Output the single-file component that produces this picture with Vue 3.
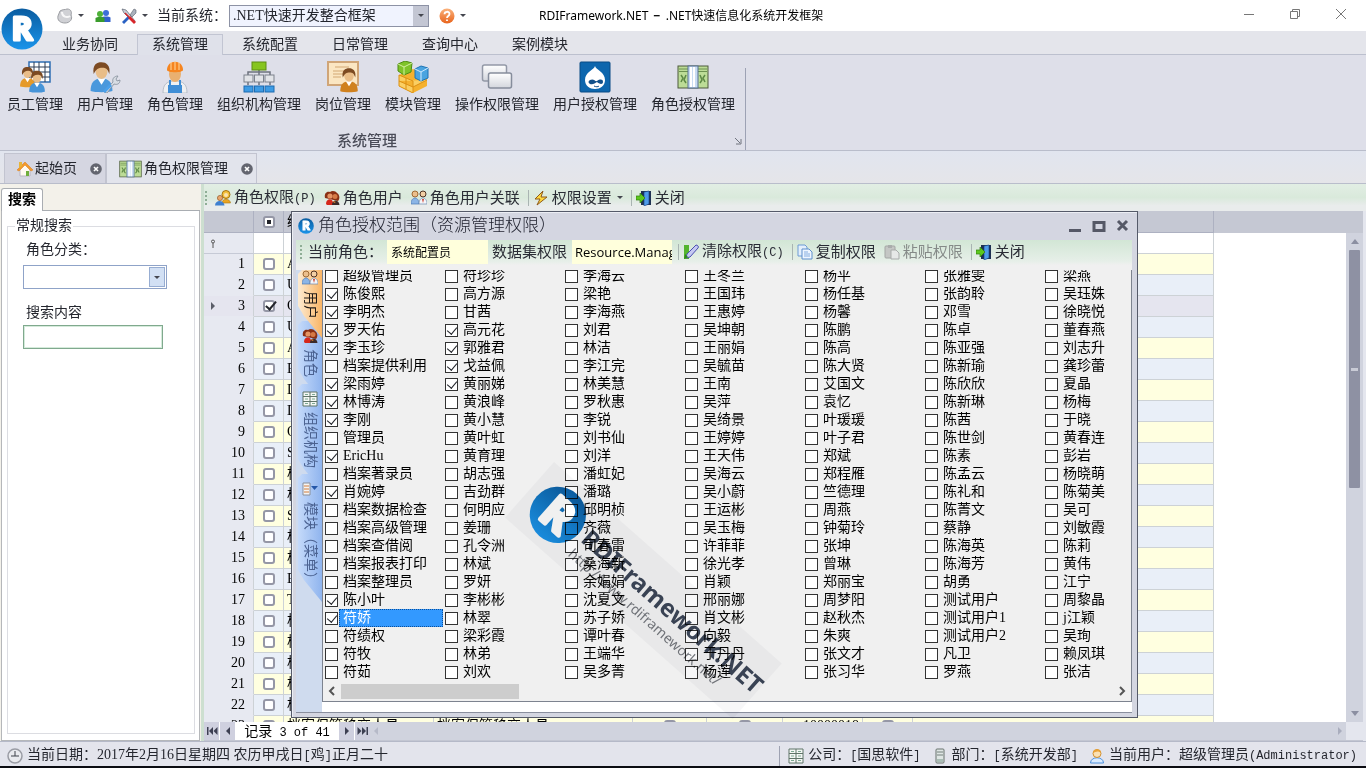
<template>
  <svg class="sprite" aria-hidden="true">
    <defs>
      <linearGradient id="g-blue" x1="0" y1="0" x2="0" y2="1">
        <stop offset="0" stop-color="#0a5ca0" />
        <stop offset="1" stop-color="#1b94ea" />
      </linearGradient>
      <linearGradient id="g-orange" x1="0" y1="0" x2="0" y2="1">
        <stop offset="0" stop-color="#fbb27c" />
        <stop offset="1" stop-color="#e8641c" />
      </linearGradient>
      <linearGradient id="g-gray" x1="0" y1="0" x2="0" y2="1">
        <stop offset="0" stop-color="#ffffff" />
        <stop offset="1" stop-color="#d3d6dd" />
      </linearGradient>
    </defs>
    <symbol id="logo" viewBox="0 0 42 42">
      <circle cx="21" cy="21" r="20.5" fill="url(#g-blue)" />
      <text x="21" y="32" text-anchor="middle" font-family="Open Sans, Noto Sans, sans-serif" font-weight="700" font-size="32" fill="#fff" stroke="#fff" stroke-width="3" stroke-linejoin="round">R</text>
    </symbol>
    <symbol id="man" viewBox="0 0 16 20">
      <path d="M1 19c0-5 2-8 7-8s7 3 7 8c-3 1-11 1-14 0z" fill="currentColor" />
      <path d="M5.500 11l2.500 4 2.500-4z" fill="#fff" />
      <ellipse cx="8" cy="6.500" rx="3.800" ry="4.700" fill="#e9bd88" />
      <path d="M3 8C2 2 5 .5 8 .5s6 2 5 7.500C12 5 11 4 8.500 4S4.500 5 3 8z" fill="#7c4a22" />
    </symbol>
    <symbol id="staff" viewBox="0 0 32 32">
      <path d="M10 1h21v20H10z" fill="#fff" stroke="#2f6fb4" stroke-width="1.500" />
      <path d="M10 6h21M10 11h21M10 16h21M15 1v20M20 1v20M26 1v20" stroke="#2c3c55" fill="none" />
      <use href="#man" x="0" y="5" width="17" height="22" color="#e59a2a" />
      <use href="#man" x="9" y="9" width="18" height="23" color="#4694d8" />
    </symbol>
    <symbol id="user-tool" viewBox="0 0 32 32">
      <use href="#man" x="0" y="0" width="25" height="32" color="#4a98dc" />
      <path d="M15 31l9-10c-1-3 1-6 5-6l-2 3 1 2 3-1c0 4-3 5-6 4l-7 9z" fill="#d8dde4" stroke="#828b98" stroke-width=".8" />
      <path d="M14 30l7-7 2 2-7 7z" fill="#4aa0ea" />
    </symbol>
    <symbol id="worker" viewBox="0 0 32 32">
      <path d="M4 32c0-9 4-12 12-12s12 3 12 12z" fill="#eef0f2" stroke="#9aa4b0" stroke-width=".6" />
      <path d="M10 19v13h12V19h-2v6h-8v-6z" fill="#3f8ed6" />
      <path d="M9 24h14v8H9z" fill="#3f8ed6" />
      <ellipse cx="16" cy="13" rx="6" ry="8" fill="#e9b070" />
      <path d="M8 9C8-2 24-2 24 9c0 3-16 3-16 0z" fill="#f6851f" />
      <path d="M12 1v8M16 0v9M20 1v8" stroke="#ffd9a0" />
    </symbol>
    <symbol id="orgchart" viewBox="0 0 32 32">
      <path d="M16 8v6M5 14v-3h22v3M5 20v4M16 14v10M27 20v4" stroke="#6d737e" stroke-width="1.500" fill="none" />
      <rect x="9" y="1" width="14" height="8" fill="#86c51e" stroke="#5c8d12" />
      <g fill="#e2e4e8" stroke="#7c828c"><rect x="1" y="14" width="9" height="7" /><rect x="11.500" y="14" width="9" height="7" /><rect x="22" y="14" width="9" height="7" /></g>
      <g fill="#3d9be4" stroke="#1d6bb0"><rect x="1" y="25" width="9" height="6" /><rect x="11.500" y="25" width="9" height="6" /><rect x="22" y="25" width="9" height="6" /></g>
    </symbol>
    <symbol id="post" viewBox="0 0 32 32">
      <rect x="1" y="1" width="30" height="23" fill="#fbe6c2" stroke="#d0a577" stroke-width="2" />
      <path d="M8 6h14M6 10h12M6 13h10M6 16h8" stroke="#d3a874" />
      <use href="#man" x="12" y="6" width="20" height="26" color="#d0811e" />
    </symbol>
    <symbol id="cubes" viewBox="0 0 32 32">
      <path d="M2 14l14-6 14 6v11l-14 7-14-7z" fill="#f5b12e" />
      <path d="M2 14l14 6v12L2 25zM9 17v11M2 20l14 6 14-7" fill="#fbcf62" stroke="#dc9013" />
      <path d="M1 3l7-3 7 2-1 9-7 3-6-4z" fill="#7fc32a" stroke="#4f8c14" />
      <path d="M1 3l6 3 8-4M7 6v8" stroke="#d5f0a0" fill="none" />
      <path d="M18 8l6-3 7 2v10l-7 3-6-3z" fill="#4aa4e0" stroke="#1c73b5" />
      <path d="M18 8l6 3 7-4M24 11v9" stroke="#cfeaff" fill="none" />
    </symbol>
    <symbol id="windows" viewBox="0 0 32 32">
      <rect x="1.500" y="4" width="24" height="16" rx="2" fill="url(#g-gray)" stroke="#9298a6" stroke-width="1.500" />
      <rect x="7.500" y="12" width="23" height="15" rx="2" fill="url(#g-gray)" stroke="#868d9c" stroke-width="1.500" />
    </symbol>
    <symbol id="drop" viewBox="0 0 32 32">
      <rect x="1" y="1" width="30" height="30" rx="1" fill="#0d66ad" stroke="#084b85" />
      <path d="M16 5c1 4 10 6 10 14 0 6-5 9-10 9S6 25 6 19c0-8 9-10 10-14z" fill="#fff" />
      <path d="M11 19c4-2 5 2 7 1 3-2 6-2 6 1s-4 2-6 0c-2 1-4 3-7 2-2-1-2-3 0-4z" fill="#12508a" />
      <path d="M15 25c2 1 4 1 5 0" stroke="#12508a" fill="none" />
    </symbol>
    <symbol id="money" viewBox="0 0 32 24">
      <rect x="1" y="1" width="30" height="22" fill="#bcdc96" stroke="#4c5b3c" />
      <path d="M2 4h28M2 6.500h28" stroke="#6c9150" />
      <path d="M4 10l2 3-2 4M9 10l-2 5 2 3M28 10l-2 3 2 4M23 10l2 5-2 3" stroke="#5c8844" fill="none" stroke-width="1.500" />
      <rect x="11" y="1" width="10" height="22" fill="#c8dcf2" stroke="#567192" />
      <path d="M14 2v20M17 2v20" stroke="#fff" stroke-width="2" />
    </symbol>
    <symbol id="bean" viewBox="0 0 16 16">
      <path d="M3 3C6 1 8 2 10 1c4 0 5 3 4 6 2 4-1 8-6 8S0 12 1 8z" fill="#d0d1d5" stroke="#9b9da2" />
      <path d="M5 4c0 5 5 6 8 4" stroke="#f7f7f8" stroke-width="2" fill="none" />
    </symbol>
    <symbol id="people" viewBox="0 0 16 16">
      <circle cx="11" cy="5" r="3" fill="#3c6fd8" /><path d="M6.500 14V9.500C7 8 15 8 15.500 9.500V14z" fill="#3060cc" />
      <circle cx="5" cy="6" r="3" fill="#4fb23a" /><path d="M.5 14v-4C1 8.500 9 8.500 9.500 10v4z" fill="#3a9c2c" />
    </symbol>
    <symbol id="tools" viewBox="0 0 16 16">
      <path d="M1 1l4 1 9 11-1 2L3 5z" fill="#c9cfd8" stroke="#5a6270" stroke-width=".7" />
      <path d="M9 7l4-6 2 1v3l-4 4z" fill="#aab2bd" stroke="#59606b" stroke-width=".6" />
      <path d="M1 14l6-6 2 2-6 6z" fill="#2a62c4" />
      <path d="M9 8l6 6-2 2-6-6z" fill="#d8262a" />
      <path d="M4 5l4 4" stroke="#d8262a" stroke-width="1.500" />
    </symbol>
    <symbol id="help" viewBox="0 0 16 16">
      <circle cx="8" cy="8" r="7.500" fill="url(#g-orange)" />
      <path d="M5.500 6.200C5.500 3 10.500 3 10.500 6c0 2-2.500 2-2.500 4M8 11.500V13" stroke="#fff" stroke-width="1.800" fill="none" />
    </symbol>
    <symbol id="home" viewBox="0 0 16 16">
      <path d="M3 8v7h10V8L8 3z" fill="#fffaf0" stroke="#b9b4c0" />
      <path d="M0 9l8-8 8 8-2 1-6-6-6 6z" fill="#f39a2b" stroke="#d8781a" stroke-width=".5" />
      <path d="M9 10h3v5H9z" fill="#6fae3c" /><path d="M2 1h3v4L2 7z" fill="#e7b53a" />
    </symbol>
    <symbol id="role-key" viewBox="0 0 16 16">
      <circle cx="11" cy="4.500" r="4" fill="#f3c03c" stroke="#a87410" /><circle cx="11" cy="5" r="2" fill="#fae3b2" />
      <path d="M7 13c0-5 8-5 8.500 0z" fill="#e9a420" stroke="#a87410" stroke-width=".6" />
      <circle cx="5" cy="8" r="2.600" fill="#e7a66c" stroke="#8a4a1a" stroke-width=".6" />
      <path d="M0 15.500c0-6 9-6 9.500 0z" fill="#3f80d0" />
    </symbol>
    <symbol id="role-user" viewBox="0 0 16 16">
      <path d="M1 8C0 3 3 1 6 2c2-2 6-1 7 1 3 2 3 6 1 8z" fill="#8a3014" />
      <circle cx="6" cy="6" r="2.600" fill="#e59463" /><circle cx="11" cy="6.500" r="2.500" fill="#d57a45" />
      <path d="M2 14c0-6 7-6 7-1l1 2H3z" fill="#d6281c" /><path d="M8 15c0-6 7-6 7.500 0z" fill="#3c2a28" />
      <path d="M9 11l3 1-2 1z" fill="#e8882c" />
    </symbol>
    <symbol id="pair" viewBox="0 0 16 16">
      <circle cx="4" cy="4" r="3" fill="#ecbf8c" stroke="#a06b34" /><circle cx="12" cy="4" r="3" fill="#f2cfa4" stroke="#503222" />
      <path d="M0 14c0-8 8-8 8 0z" fill="#8cb5e6" stroke="#4a78b4" stroke-width=".7" /><path d="M8 14c0-8 8-8 8 0z" fill="#f4f6fa" stroke="#6c86ae" stroke-width=".7" />
      <path d="M11 9h2l-1 4z" fill="#cd3d2a" />
    </symbol>
    <symbol id="bolt" viewBox="0 0 16 16">
      <path d="M10 1L2 9h5l-3 6 10-8H8z" fill="#ffd83c" stroke="#8f5a1a" />
    </symbol>
    <symbol id="door" viewBox="0 0 16 16">
      <path d="M5 1h10v14H5z" fill="#1e3152" /><path d="M8 2l5-1v13l-5 2z" fill="#4e9be8" stroke="#163e80" stroke-width=".6" />
      <path d="M0 6h4V3l5 5-5 5v-3H0z" fill="#5cc81e" stroke="#2f7d0b" stroke-width=".7" />
    </symbol>
    <symbol id="pen" viewBox="0 0 16 16">
      <path d="M1 1h5v14H1z" fill="#53b52e" /><path d="M4 10L13 1c2 0 3 2 2 3l-8 9-4 1z" fill="#c5c8f2" stroke="#4a4fb0" />
      <path d="M1 15l1-5 3 3z" fill="#2e8a1a" />
    </symbol>
    <symbol id="copy" viewBox="0 0 16 16">
      <path d="M1 1h7l2 2v9H1z" fill="#e4effc" stroke="#6d9bd4" /><path d="M5 5h7l3 3v7H5z" fill="#eef5ff" stroke="#5f8fcc" />
      <path d="M7 8h4M7 10h6M7 12h6" stroke="#85ade0" />
    </symbol>
    <symbol id="paste" viewBox="0 0 16 16">
      <rect x="1" y="2" width="10" height="12" rx="1" fill="#c4c6c4" stroke="#a3a6a4" /><path d="M4 1h4v3H4z" fill="#a9acab" />
      <path d="M7 6h5l3 3v6H7z" fill="#e6e8e7" stroke="#a8abaa" />
    </symbol>
    <symbol id="sheet" viewBox="0 0 16 16">
      <path d="M1 1h14v14H1z" fill="#f4f7f5" stroke="#5f7468" /><path d="M8 1v14M1 5.500h14M1 10.500h14" stroke="#5f7468" />
      <path d="M3 3.500h3M10 3.500h3M3 8h3M10 8h3M3 12.500h3M10 12.500h3" stroke="#7da891" />
    </symbol>
    <symbol id="menu" viewBox="0 0 16 16">
      <path d="M1 2h7v12H1z" fill="#f5f5f5" stroke="#8a8f9a" /><path d="M2 5h5M2 8h5M2 11h5" stroke="#d07d3c" /><path d="M9 5h7l-3.500 4z" fill="#2557a8" />
    </symbol>
    <symbol id="clock" viewBox="0 0 16 16">
      <circle cx="8" cy="8" r="7" fill="#e9eaee" stroke="#9a9ca4" stroke-width="1.500" /><path d="M8 3v5h4M4 8h4" stroke="#3f424a" fill="none" />
    </symbol>
    <symbol id="server" viewBox="0 0 16 16">
      <rect x="4" y="1" width="8" height="14" rx="1" fill="#dfe6e4" stroke="#68736f" /><path d="M5 4h6M5 7h6" stroke="#74807c" /><path d="M5 11h6v3H5z" fill="#a9bdb5" />
    </symbol>
    <symbol id="person" viewBox="0 0 16 16">
      <path d="M1.500 15c0-7 13-7 13 0z" fill="#d9ebff" stroke="#4a8edc" /><circle cx="8" cy="5.500" r="4" fill="#fbe1b4" stroke="#d18f2c" /><path d="M4 5c0-5 8-5 8 0-2-2-5-2-8 0z" fill="#e9a33a" />
    </symbol>
    <symbol id="x-dot" viewBox="0 0 12 12">
      <circle cx="6" cy="6" r="5.800" fill="#63656f" /><path d="M4 4l4 4M8 4L4 8" stroke="#fff" stroke-width="1.600" />
    </symbol>
  </svg>

  <div class="app">
    <svg class="app-logo"><use href="#logo" /></svg>

    <header class="titlebar">
      <div class="quick">
        <svg class="ic"><use href="#bean" /></svg><i class="caret"></i>
        <svg class="ic"><use href="#people" /></svg>
        <svg class="ic gap"><use href="#tools" /></svg><i class="caret"></i>
        <label for="system">当前系统：</label>
        <div class="combo system">
          <select id="system"><option>.NET快速开发整合框架</option></select>
          <i class="drop"><i class="caret"></i></i>
        </div>
        <svg class="ic"><use href="#help" /></svg><i class="caret"></i>
      </div>
      <h1>RDIFramework.NET <b>−</b> .NET快速信息化系统开发框架</h1>
      <div class="win-btns">
        <button type="button" aria-label="–"><svg viewBox="0 0 12 12"><path d="M1 6.500h10" /></svg></button>
        <button type="button" aria-label="□"><svg viewBox="0 0 12 12"><path d="M1.500 3.500h7v7h-7zM3.500 3.500v-2h7v7h-2" /></svg></button>
        <button type="button" aria-label="×"><svg viewBox="0 0 12 12"><path d="M1 1l10 10M11 1L1 11" /></svg></button>
      </div>
    </header>

    <nav class="ribbon-tabs">
      <button v-for="t in ribbonTabs" :key="t" type="button" :class="{ active: t === '系统管理' }">{{ t }}</button>
    </nav>

    <section class="ribbon">
      <div class="group">
        <div class="tools">
          <button v-for="t in tools" :key="t.text" type="button">
            <svg><use :href="'#' + t.icon" /></svg>
            <span>{{ t.text }}</span>
          </button>
        </div>
        <div class="group-name">
          <span>系统管理</span>
          <svg class="launcher" viewBox="0 0 8 8"><path d="M1 1l5 5M7 2v5H2" /></svg>
        </div>
      </div>
    </section>

    <nav class="doc-tabs">
      <div class="doc-tab">
        <svg class="ic"><use href="#home" /></svg><span>起始页</span>
        <button type="button" aria-label="×"><svg><use href="#x-dot" /></svg></button>
      </div>
      <div class="doc-tab active">
        <svg class="ic wide"><use href="#money" /></svg><span>角色权限管理</span>
        <button type="button" aria-label="×"><svg><use href="#x-dot" /></svg></button>
      </div>
    </nav>

    <main class="work">
      <aside class="search">
        <div class="search-tabs"><button type="button">搜索</button></div>
        <div class="search-body">
          <fieldset>
            <legend>常规搜索</legend>
            <label for="category">角色分类：</label>
            <div class="combo category">
              <select id="category"><option></option></select>
              <i class="drop"><i class="caret"></i></i>
            </div>
            <label for="content">搜索内容</label>
            <input id="content" type="text" />
          </fieldset>
        </div>
      </aside>

      <section class="content">
        <div class="toolbar main-bar">
          <i class="grip"></i>
          <button type="button"><svg class="ic"><use href="#role-key" /></svg><span>角色权限<span class="half">(P)</span></span></button>
          <button type="button"><svg class="ic"><use href="#role-user" /></svg>角色用户</button>
          <button type="button"><svg class="ic"><use href="#pair" /></svg>角色用户关联</button>
          <i class="sep"></i>
          <button type="button"><svg class="ic"><use href="#bolt" /></svg>权限设置<i class="caret"></i></button>
          <i class="sep"></i>
          <button type="button"><svg class="ic"><use href="#door" /></svg>关闭</button>
        </div>

        <div class="grid">
          <div class="grid-rows">
            <table>
              <colgroup>
                <col class="c-ind" /><col class="c-chk" /><col class="c-code" /><col class="c-name" /><col class="c-a" /><col class="c-b" /><col class="c-no" /><col class="c-c" /><col class="c-rest" />
              </colgroup>
              <thead>
                <tr>
                  <th></th>
                  <th><input type="checkbox" class="mixed" aria-label="编" /></th>
                  <th class="left">编</th>
                  <th v-for="n in 6" :key="n"></th>
                </tr>
              </thead>
              <tbody>
                <tr class="filter">
                  <td class="ind"><svg class="pin" viewBox="0 0 6 9"><path d="M3 4v5" /><circle cx="3" cy="2.500" r="1.500" /></svg></td>
                  <td v-for="n in 8" :key="n"></td>
                </tr>
                <tr v-for="(code, i) in codes" :key="i" :class="{ current: i === 2 }">
                  <td class="ind"><i v-if="i === 2" class="pointer"></i>{{ i + 1 }}</td>
                  <td class="mid"><input type="checkbox" :checked="i === 2" :aria-label="`${i + 1}`" /></td>
                  <td>{{ code }}</td>
                  <td>{{ i === 22 ? code : '' }}</td>
                  <td class="mid"><input v-if="i === 22" type="checkbox" :aria-label="code" /></td>
                  <td class="mid"><input v-if="i === 22" type="checkbox" :aria-label="code" /></td>
                  <td class="num">{{ i === 22 ? '10000018' : '' }}</td>
                  <td class="mid"><input v-if="i === 22" type="checkbox" :aria-label="code" /></td>
                  <td></td>
                </tr>
              </tbody>
            </table>
            <div class="vbar"><i class="up"></i><i class="thumb"></i><i class="down"></i></div>
          </div>
          <div class="pager">
            <button type="button" aria-label="|◀"><svg viewBox="0 0 12 8"><path d="M1 0h1.500v8H1zM7 0v8L3 4zM11.500 0v8l-4-4z" /></svg></button>
            <button type="button" aria-label="◀"><svg viewBox="0 0 12 8"><path d="M8 0v8L4 4z" /></svg></button>
            <span class="record">记录<span class="half"> 3 of 41</span></span>
            <button type="button" aria-label="▶"><svg viewBox="0 0 12 8"><path d="M4 0v8l4-4z" /></svg></button>
            <button type="button" aria-label="▶|"><svg viewBox="0 0 12 8"><path d="M.5 0v8l4-4zM5 0v8l4-4zM9.500 0H11v8H9.500z" /></svg></button>
            <div class="hbar"><i class="to-left"></i><i class="to-right"></i></div>
            <i class="corner"></i>
          </div>
        </div>
      </section>
    </main>

    <footer class="status">
      <svg class="ic"><use href="#clock" /></svg>
      <span class="date">当前日期：2017年2月16日星期四 农历甲戌日<span class="half">[</span>鸡<span class="half">]</span>正月二十</span>
      <i class="rule"></i>
      <svg class="ic"><use href="#sheet" /></svg>
      <span>公司：<span class="half">[</span>国思软件<span class="half">]</span></span>
      <svg class="ic"><use href="#server" /></svg>
      <span>部门：<span class="half">[</span>系统开发部<span class="half">]</span></span>
      <svg class="ic"><use href="#person" /></svg>
      <span>当前用户：超级管理员<span class="half">(Administrator)</span></span>
    </footer>

    <section class="dialog" role="dialog" aria-labelledby="dialog-title">
      <div class="dialog-title">
        <svg class="ic"><use href="#logo" /></svg>
        <h2 id="dialog-title">角色授权范围（资源管理权限）</h2>
        <button type="button" aria-label="–"><svg viewBox="0 0 14 14"><path d="M1 11.500h12" /></svg></button>
        <button type="button" aria-label="□"><svg viewBox="0 0 14 14"><path d="M2 3.500h10v8H2z" /></svg></button>
        <button type="button" aria-label="×"><svg viewBox="0 0 14 14"><path d="M2 2l9 9M11 2l-9 9" /></svg></button>
      </div>

      <div class="toolbar dialog-bar">
        <i class="grip"></i>
        <label for="role">当前角色：</label>
        <input id="role" class="role" type="text" value="系统配置员" readonly />
        <label for="scope">数据集权限</label>
        <input id="scope" class="scope" type="text" value="Resource.Manag" readonly />
        <i class="sep"></i>
        <button type="button"><svg class="ic"><use href="#pen" /></svg><span>清除权限<span class="half">(C)</span></span></button>
        <i class="sep"></i>
        <button type="button"><svg class="ic"><use href="#copy" /></svg>复制权限</button>
        <button type="button" disabled><svg class="ic"><use href="#paste" /></svg>粘贴权限</button>
        <i class="sep"></i>
        <button type="button"><svg class="ic"><use href="#door" /></svg>关闭</button>
      </div>

      <div class="dialog-body">
        <div class="side-tabs">
          <button v-for="t in sideTabs" :key="t.text" type="button" :class="t.cls">
            <svg class="ic"><use :href="'#' + t.icon" /></svg>
            <span>{{ t.text }}</span>
          </button>
        </div>
        <div class="pane">
          <div class="names">
            <ul v-for="(col, c) in columns" :key="c">
              <li v-for="name in col" :key="name">
                <label :class="{ selected: name === '符娇' }">
                  <input type="checkbox" :checked="checked.includes(name)" />
                  <span>{{ name }}</span>
                </label>
              </li>
            </ul>
          </div>
          <div class="list-scroll">
            <svg viewBox="0 0 8 10"><path d="M6 1L2 5l4 4" /></svg>
            <i class="thumb"></i>
            <svg viewBox="0 0 8 10"><path d="M2 1l4 4-4 4" /></svg>
          </div>
        </div>
      </div>

      <div class="watermark">
        <svg><use href="#logo" /></svg>
        <div>
          <strong>RDIFramework.NET</strong>
          <small>http://www.rdiframework.net/</small>
        </div>
      </div>
    </section>
  </div>
</template>

<script setup>
const ribbonTabs = ['业务协同', '系统管理', '系统配置', '日常管理', '查询中心', '案例模块'];

const tools = [
  { icon: 'staff', text: '员工管理' },
  { icon: 'user-tool', text: '用户管理' },
  { icon: 'worker', text: '角色管理' },
  { icon: 'orgchart', text: '组织机构管理' },
  { icon: 'post', text: '岗位管理' },
  { icon: 'cubes', text: '模块管理' },
  { icon: 'windows', text: '操作权限管理' },
  { icon: 'drop', text: '用户授权管理' },
  { icon: 'money', text: '角色授权管理' }
];

const codes = [
  'A', 'U', 'O', 'U', 'A', 'E', 'D', 'D', 'O', 'S', '档', '档',
  'S', '档', '档', 'E', 'T', '档', '档', '档', '档', '档', '档案保管移交人员'
];

const sideTabs = [
  { icon: 'pair', text: '用户', cls: 'active' },
  { icon: 'role-user', text: '角色', cls: 'second' },
  { icon: 'sheet', text: '组织机构', cls: 'third' },
  { icon: 'menu', text: '模块（菜单）', cls: 'fourth' }
];

const columns = [
  '超级管理员 陈俊熙 李明杰 罗天佑 李玉珍 档案提供利用 梁雨婷 林博涛 李刚 管理员 EricHu 档案著录员 肖婉婷 档案数据检查 档案高级管理 档案查借阅 档案报表打印 档案整理员 陈小叶 符娇 符绩权 符牧 符茹',
  '符珍珍 高方源 甘茜 高元花 郭雅君 戈益佩 黄丽娣 黄浪峰 黄小慧 黄叶虹 黄育理 胡志强 吉劲群 何明应 姜珊 孔令洲 林斌 罗妍 李彬彬 林翠 梁彩霞 林弟 刘欢',
  '李海云 梁艳 李海燕 刘君 林洁 李江完 林美慧 罗秋惠 李锐 刘书仙 刘洋 潘虹妃 潘璐 邱明桢 齐薇 司春雷 桑海新 余娟娟 沈夏文 苏子娇 谭叶春 王端华 吴多菁',
  '王冬兰 王国玮 王惠婷 吴坤朝 王丽娟 吴毓苗 王南 吴萍 吴绮景 王婷婷 王天伟 吴海云 吴小蔚 王运彬 吴玉梅 许菲菲 徐光孝 肖颖 邢丽娜 肖文彬 向毅 于丹丹 杨莲',
  '杨平 杨任基 杨馨 陈鹏 陈高 陈大贤 艾国文 袁忆 叶瑗瑗 叶子君 郑斌 郑程雁 竺德理 周燕 钟菊玲 张坤 曾琳 郑丽宝 周梦阳 赵秋杰 朱爽 张文才 张习华',
  '张雅雯 张韵聆 邓雪 陈卓 陈亚强 陈新瑜 陈欣欣 陈新琳 陈茜 陈世剑 陈素 陈孟云 陈礼和 陈菁文 蔡静 陈海英 陈海芳 胡勇 测试用户 测试用户1 测试用户2 凡卫 罗燕',
  '梁燕 吴珏姝 徐晓悦 董春燕 刘志升 龚珍蕾 夏晶 杨梅 于晓 黄春连 彭岩 杨晓萌 陈菊美 吴可 刘敏霞 陈莉 黄伟 江宁 周黎晶 j江颖 吴珣 赖凤琪 张洁'
].map((col) => col.split(' '));

const checked = [
  '陈俊熙', '李明杰', '罗天佑', '李玉珍', '梁雨婷', '林博涛', '李刚', 'EricHu',
  '肖婉婷', '陈小叶', '符娇', '高元花', '郭雅君', '戈益佩', '黄丽娣'
];
</script>

<style>
html,
body {
  overflow: hidden;
}
</style>

<style scoped>
* {
  box-sizing: border-box;
}

.sprite {
  position: absolute;
  width: 0;
  height: 0;
}

.app {
  position: relative;
  display: flex;
  flex-direction: column;
  height: 100vh;
  font-family: 'Liberation Serif', 'Noto Sans CJK SC', sans-serif;
  font-size: 14px;
  font-weight: 400;
  line-height: 18px;
  color: #24262e;
  background: #e4e6ee;
  white-space: nowrap;
}

button,
input,
select {
  font: inherit;
  color: inherit;
  margin: 0;
  padding: 0;
  border: none;
  background: none;
  outline: none;
}

h1,
h2,
ul {
  margin: 0;
  padding: 0;
  font-weight: inherit;
  list-style: none;
}

.ic {
  width: 16px;
  height: 16px;
  flex: none;
}

.caret {
  flex: none;
  border: 3px solid transparent;
  border-top-color: #44464f;
  border-bottom: none;
}

.half {
  font-family: 'Liberation Mono', monospace;
  font-size: 12px;
  white-space: pre;
}

.combo {
  position: relative;
  display: flex;
  background: #fff;
  border: 1px solid #8d92a5;
}

.combo select {
  flex: 1;
  min-width: 0;
  appearance: none;
}

.combo .drop {
  display: flex;
  align-items: center;
  justify-content: center;
  width: 15px;
  background: #c3c6d3;
  pointer-events: none;
}

.app-logo {
  position: absolute;
  left: 1px;
  top: 8px;
  width: 42px;
  height: 42px;
  z-index: 2;
}

/* title bar */
.titlebar {
  display: flex;
  align-items: center;
  height: 31px;
  flex: none;
  background: #fff;
}

.quick {
  display: flex;
  align-items: center;
  width: 539px;
  padding-left: 57px;
  gap: 5px;
}

.quick .caret {
  margin-right: 6px;
}

.quick .gap {
  margin-left: 5px;
}

.quick .gap + .caret {
  margin-right: 4px;
}

.system {
  width: 200px;
  height: 22px;
  margin: 0 5px 0 -3px;
  background: #f0f3fe;
}

.system select {
  padding-left: 3px;
}

.system .caret {
  margin: 0;
}

.titlebar h1 {
  flex: 1;
  font-family: 'Noto Sans', 'Noto Sans CJK SC', sans-serif;
  font-size: 12px;
  color: #000;
}

.titlebar b {
  margin: 0 2px;
}

.win-btns {
  display: flex;
  padding-right: 2px;
}

.win-btns button {
  width: 46px;
  height: 28px;
}

.win-btns svg {
  width: 12px;
  height: 12px;
  fill: none;
  stroke: #777;
}

/* ribbon */
.ribbon-tabs {
  display: flex;
  gap: 4px;
  height: 24px;
  flex: none;
  padding: 3px 0 0 47px;
  background: #e4e5eb;
  border-bottom: 1px solid #bcc0ce;
}

.ribbon-tabs button {
  width: 86px;
  height: 21px;
  border: 1px solid transparent;
  border-bottom: none;
}

.ribbon-tabs .active {
  border-color: #c2c5d2;
  background: #dfe1ea;
}

.ribbon {
  display: flex;
  height: 96px;
  flex: none;
  background: #dedfe9;
  border-bottom: 1px solid #b9bdcb;
}

.group {
  display: flex;
  flex-direction: column;
  justify-content: space-between;
  padding-right: 3px;
  border-right: 1px solid;
  border-image: linear-gradient(transparent 14%, #9da2b4 14%) 1;
}

.tools {
  display: flex;
  padding-top: 6px;
}

.tools button {
  display: flex;
  flex-direction: column;
  align-items: center;
  gap: 3px;
  padding: 0 7px;
}

.tools svg {
  width: 32px;
  height: 32px;
}

.group-name {
  display: flex;
  align-items: center;
  height: 18px;
  font-weight: 500;
  font-size: 15px;
  color: #4a4c58;
}

.group-name span {
  flex: 1;
  text-align: center;
}

.launcher {
  width: 8px;
  height: 8px;
  fill: none;
  stroke: #70747f;
}

/* document tabs */
.doc-tabs {
  display: flex;
  align-items: flex-end;
  height: 33px;
  flex: none;
  padding-left: 4px;
  background: linear-gradient(#e1e5ef, #e5e5e9);
  border-bottom: 1px solid #b9bdcb;
}

.doc-tab {
  display: flex;
  align-items: center;
  gap: 2px;
  height: 30px;
  padding: 0 3px 0 12px;
  background: #d5d6e1;
  border: 1px solid #c2c4d0;
  border-bottom: none;
}

.doc-tab.active {
  background: #e2e4ec;
}

.doc-tab .wide {
  width: 23px;
  height: 18px;
}

.doc-tab button {
  display: flex;
  margin-left: 11px;
}

.doc-tab button svg {
  width: 12px;
  height: 12px;
}

/* search panel */
.work {
  display: flex;
  flex: 1;
  min-height: 0;
}

.search {
  display: flex;
  flex-direction: column;
  width: 201px;
  padding: 0 1px;
  flex: none;
  background: #f3f1ea;
}

.search-tabs {
  height: 27px;
  padding-top: 4px;
  border-bottom: 1px solid #a9adb2;
}

.search-tabs button {
  height: 23px;
  width: 42px;
  background: #fff;
  border: 1px solid #a9adb2;
  border-bottom: none;
  border-radius: 3px 3px 0 0;
  font-weight: 700;
  color: #000;
}

.search-body {
  display: flex;
  flex: 1;
  padding: 6px 4px 6px 5px;
  background: #fff;
  border: 1px solid #b5b7ba;
  border-top: none;
}

fieldset {
  flex: 1;
  min-width: 0;
  margin: 0;
  padding: 6px 15px;
  border: 1px solid #dcdde2;
}

legend {
  margin-left: -8px;
  padding: 0 1px;
}

fieldset label {
  display: block;
  margin-left: 3px;
}

.category {
  width: 144px;
  height: 24px;
  margin: 6px 0 15px;
  border-color: #8fa3c8;
}

.category .drop {
  margin: 1px;
  width: 16px;
  border: 1px solid #97add2;
  background: #d2e0f4;
}

#content {
  width: 140px;
  height: 24px;
  margin-top: 3px;
  border: 1px solid #80a98e;
  box-shadow: inset 0 0 0 1px #d5ebdb;
}

/* toolbars */
.content {
  display: flex;
  flex-direction: column;
  flex: 1;
  min-width: 0;
  border-left: 3px solid #cddfd0;
}

.toolbar {
  display: flex;
  align-items: center;
  font-size: 15px;
  color: #2a2c35;
  flex: none;
}

.toolbar button {
  display: flex;
  align-items: center;
  gap: 3px;
}

.toolbar button:disabled {
  color: #858a88;
}

.grip {
  width: 2px;
  height: 14px;
  background: repeating-linear-gradient(#8fae96 0 2px, transparent 2px 4px);
}

.sep {
  width: 1px;
  height: 16px;
  flex: none;
  background: #a9b4b2;
}

.main-bar {
  height: 27px;
  padding-left: 1px;
  background: linear-gradient(#e2eee4, #d9e9db 50%, #e9ecec 80%);
}

.main-bar button {
  margin-left: 8px;
}

.main-bar .sep {
  margin-left: 8px;
}

.main-bar .sep + button {
  margin-left: 4px;
}

.main-bar .caret {
  margin-left: 2px;
}

/* grid */
.grid {
  display: flex;
  flex-direction: column;
  flex: 1;
  min-height: 0;
  padding-right: 3px;
}

.grid-rows {
  display: flex;
  justify-content: space-between;
  flex: 1;
  min-height: 0;
  overflow: hidden;
  background: linear-gradient(#c5c8d3 22px, #fff 22px);
}

table {
  width: 1010px;
  align-self: flex-start;
  table-layout: fixed;
  border-spacing: 0;
  color: #000;
}

.c-ind { width: 50px; }
.c-chk { width: 30px; }
.c-code { width: 150px; }
.c-name { width: 199px; }
.c-a { width: 74px; }
.c-b { width: 76px; }
.c-no { width: 80px; }
.c-c { width: 50px; }

th {
  height: 22px;
  padding: 0 3px;
  border-right: 1px solid #adb1c1;
  border-bottom: 1px solid #adb1c1;
  font-weight: 400;
  overflow: hidden;
}

th.left {
  text-align: left;
}

td {
  height: 21px;
  padding: 0 3px;
  border-right: 1px solid #cdd2d6;
  border-bottom: 1px solid #cdd2d6;
  background: #ffffe0;
  line-height: 20px;
  overflow: hidden;
}

tr:nth-child(odd) td {
  background: #e9eff8;
}

tr.filter td {
  background: #fff;
}

tr.current td {
  background: #e5e5ef;
}

tr .ind,
tr.filter .ind,
tr:nth-child(odd) .ind {
  padding-right: 8px;
  text-align: right;
  background: #e7e9f1;
  border-bottom-color: #e7e9f1;
}

tr.filter .ind {
  border-bottom-color: #c6cad6;
  text-align: left;
}

.pin {
  display: block;
  width: 6px;
  height: 9px;
  margin-left: 3px;
  fill: none;
  stroke: #555;
}

.pointer {
  float: left;
  margin: 6px 0 0 4px;
  border: 4px solid transparent;
  border-left-color: #5b5e69;
  border-right: none;
}

.mid {
  text-align: center;
}

.num {
  text-align: right;
}

input[type='checkbox'] {
  appearance: none;
  position: relative;
  flex: none;
  background: #fff;
}

table input[type='checkbox'] {
  display: block;
  width: 12px;
  height: 12px;
  margin: 0 auto;
  border: 2px solid #9597a6;
  border-radius: 3px;
}

table input:checked::after,
.names input:checked::after {
  content: '';
  position: absolute;
  left: 3px;
  top: -3px;
  width: 4px;
  height: 9px;
  border: solid #23252b;
  border-width: 0 2px 2px 0;
  transform: rotate(40deg);
}

.mixed::after {
  content: '';
  position: absolute;
  left: 2px;
  top: 2px;
  width: 4px;
  height: 4px;
  background: #23252b;
}

.vbar {
  display: flex;
  flex-direction: column;
  align-items: center;
  width: 17px;
  margin-top: 22px;
  padding: 6px 0;
  background: #d0d3de;
}

.vbar .thumb {
  width: 11px;
  height: 238px;
  margin: 6px 0 auto;
  border-radius: 1px;
  background: #8e91a3 linear-gradient(#c9cbd6, #c9cbd6) center / 7px 3px no-repeat;
}

.up,
.down,
.to-left,
.to-right {
  border: 4px solid transparent;
}

.up {
  border-bottom: 5px solid #8b8fa1;
  border-top: none;
}

.down {
  border-top: 5px solid #8b8fa1;
  border-bottom: none;
}

.pager {
  display: flex;
  height: 19px;
  flex: none;
  background: #fff;
  border-bottom: 1px solid #c3c6d2;
}

.pager button {
  display: flex;
  align-items: center;
  justify-content: center;
  width: 15px;
  background: #cfd0df;
}

.pager button + button {
  margin-left: 1px;
}

.pager button svg {
  width: 12px;
  height: 8px;
  fill: #3d3f52;
}

.record {
  width: 104px;
  line-height: 20px;
  text-align: center;
  color: #000;
}

.hbar {
  display: flex;
  flex: 1;
  align-items: center;
  justify-content: space-between;
  padding: 0 4px;
  background: #d0d3de;
}

.to-left {
  border-right-color: #b6bac8;
  border-left: none;
}

.to-right {
  border-left-color: #a9adbd;
  border-right: none;
}

.corner {
  width: 17px;
  background: #e4e6ee;
}

/* status bar */
.status {
  display: flex;
  align-items: center;
  height: 27px;
  flex: none;
  gap: 4px;
  padding: 3px 9px 0 7px;
  border-top: 1px solid #b5b9c8;
  border-bottom: 2px solid #0b0c12;
  background: #e3e4ec;
}

.status .date {
  flex: 1;
}

.status .ic:nth-of-type(n + 3) {
  margin-left: 7px;
}

.status .rule {
  width: 1px;
  height: 20px;
  margin-right: 4px;
  background: #9ea2b2;
}

/* dialog */
.dialog {
  position: absolute;
  left: 291px;
  top: 211px;
  width: 847px;
  height: 507px;
  display: flex;
  flex-direction: column;
  padding: 0 5px 4px 4px;
  background: #d4d6e1;
  border: 1px solid #555a69;
  box-shadow: inset 1px 1px 0 #eceef4;
}

.dialog-title {
  display: flex;
  align-items: center;
  height: 28px;
  flex: none;
  padding: 0 2px;
  gap: 10px;
}

.dialog-title h2 {
  flex: 1;
  margin-left: -6px;
  font-size: 17px;
  line-height: 24px;
  font-weight: 300;
  color: #1d1f2c;
}

.dialog-title button {
  display: flex;
}

.dialog-title button svg {
  width: 14px;
  height: 14px;
  fill: none;
  stroke: #555866;
  stroke-width: 3;
}

.dialog-bar {
  height: 30px;
  padding: 0 0 6px 4px;
  background: linear-gradient(#d2e6d5, #e6efe8 70%, #f0f0f0 84%);
}

.dialog-bar label {
  margin-left: 6px;
}

.dialog-bar input {
  height: 24px;
  background: #ffffdc;
  color: #000;
}

.dialog-bar .role {
  width: 101px;
  margin: 0 -2px 0 4px;
  padding-left: 4px;
  font-size: 12px;
}

.dialog-bar .scope {
  width: 100px;
  margin: 0 6px 0 5px;
  padding-left: 3px;
  font-family: 'Open Sans', sans-serif;
  font-size: 13px;
}

.dialog-bar .sep {
  margin-right: 4px;
}

.dialog-bar button {
  margin-right: 8px;
}

.dialog-body {
  display: flex;
  flex: 1;
  min-height: 0;
  background: #fff;
  border-bottom: 1px solid #8a8f9e;
}

.side-tabs {
  display: flex;
  flex-direction: column;
  width: 26px;
  flex: none;
  padding-left: 2px;
  background: #cfdbee;
}

.side-tabs button {
  display: flex;
  flex-direction: column;
  align-items: center;
  gap: 5px;
  width: 24px;
  padding: 7px 0 0;
  margin-bottom: -17px;
  color: #4a6190;
  background: linear-gradient(90deg, #c5dafa, #8fb4ee);
  clip-path: polygon(0 4px, 4px 0, 100% 0, 100% 100%, 6px calc(100% - 22px), 0 calc(100% - 32px));
}

.side-tabs span {
  writing-mode: vertical-rl;
  text-orientation: sideways;
}

.side-tabs .active {
  position: relative;
  height: 68px;
  padding: 0;
  color: #1f1a18;
  background: linear-gradient(90deg, #fdebd2, #f9b566);
  z-index: 1;
}

.side-tabs .second { height: 80px; }
.side-tabs .third { height: 107px; }
.side-tabs .fourth { height: 128px; }

.pane {
  display: flex;
  flex-direction: column;
  flex: 1;
  min-width: 0;
  margin: 0 0 10px;
  padding-bottom: 2px;
  background: #f0f0f0;
  border: solid #7d838f;
  border-width: 0 1px 1px;
}

.names {
  display: flex;
  flex: 1;
  min-height: 0;
  overflow: hidden;
  padding-left: 1px;
  color: #000;
}

.names ul {
  width: 120px;
  flex: none;
  margin-top: -3px;
}

.names label {
  display: flex;
  align-items: center;
  height: 18px;
  padding-right: 1px;
}

.names span {
  flex: 1;
  height: 18px;
  padding-left: 4px;
}

.names input {
  width: 13px;
  height: 13px;
  margin: 1px 1px 0;
  border: 1px solid #333;
}

.names input:checked::after {
  top: 0;
  width: 5px;
  height: 8px;
  border-width: 0 1px 1px 0;
}

.names .selected span {
  background: #3399ff;
  color: #fff;
  outline: 1px dotted #0c4f9a;
  outline-offset: -1px;
}

.list-scroll {
  display: flex;
  align-items: center;
  height: 16px;
  flex: none;
  padding: 0 5px;
}

.list-scroll svg {
  width: 8px;
  height: 10px;
  fill: none;
  stroke: #555;
  stroke-width: 2;
}

.list-scroll .thumb {
  width: 178px;
  height: 15px;
  margin: 0 auto 0 5px;
  background: #cdcdcd;
}

.watermark {
  position: absolute;
  left: 228px;
  top: 266px;
  display: flex;
  align-items: center;
  gap: 5px;
  width: 304px;
  height: 74px;
  padding-left: 9px;
  background: rgba(205, 205, 212, 0.16);
  transform: rotate(41.5deg);
  transform-origin: 38px 37px;
  mix-blend-mode: multiply;
  pointer-events: none;
  font-family: 'Noto Sans', sans-serif;
}

.watermark svg {
  width: 60px;
  height: 60px;
}

.watermark div {
  display: flex;
  flex-direction: column;
  padding-top: 14px;
}

.watermark strong {
  font-size: 24px;
  line-height: 24px;
  font-weight: 700;
  color: #3c4658;
}

.watermark small {
  font-size: 14px;
  line-height: 22px;
  color: #777a80;
}
</style>
